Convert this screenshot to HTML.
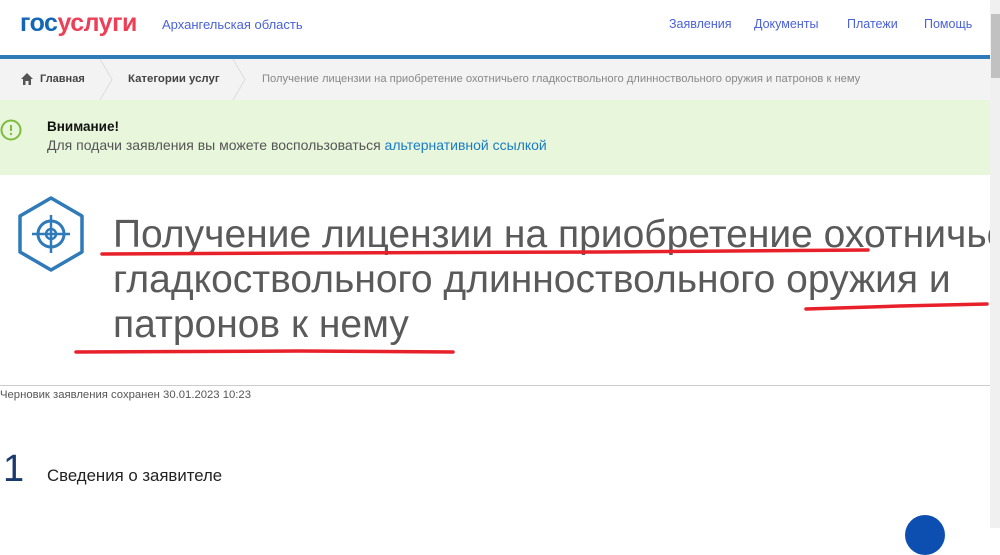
<!DOCTYPE html>
<html><head><meta charset="utf-8"><style>
*{margin:0;padding:0;box-sizing:border-box}
body{width:1000px;height:528px;overflow:hidden;background:#fff;font-family:"Liberation Sans",Arial,sans-serif;position:relative}
.a{position:absolute;white-space:nowrap}
</style></head><body>
<div class="a" style="left:20px;top:9px;font-size:25px;font-weight:bold;letter-spacing:-0.5px"><span style="color:#1467b4">гос</span><span style="color:#ee3f58">услуги</span></div>
<div class="a" style="left:162px;top:17px;font-size:13px;color:#4a62d8">Архангельская область</div>
<div class="a" style="left:669px;top:17px;font-size:12.5px;color:#4a62d8">Заявления</div>
<div class="a" style="left:754px;top:17px;font-size:12.5px;color:#4a62d8">Документы</div>
<div class="a" style="left:847px;top:17px;font-size:12.5px;color:#4a62d8">Платежи</div>
<div class="a" style="left:924px;top:17px;font-size:12.5px;color:#4a62d8">Помощь</div>
<div class="a" style="left:0;top:55px;width:990px;height:4px;background:#2f7ab8"></div>
<div class="a" style="left:0;top:59px;width:990px;height:41px;background:#f3f3f3"></div>
<svg class="a" style="left:0;top:59px" width="990" height="41"><path d="M100 0 L112 20.5 L100 41 M233 0 L245 20.5 L233 41" stroke="#ddd" fill="none"/><path d="M21 20 L27 14 L33 20 H31 V26 H28.5 V22 H25.5 V26 H23 V20Z" fill="#555"/></svg>
<div class="a" style="left:40px;top:73px;font-size:11px;font-weight:bold;color:#444">Главная</div>
<div class="a" style="left:128px;top:73px;font-size:11.4px;font-weight:bold;color:#444">Категории услуг</div>
<div class="a" style="left:262px;top:73px;font-size:11.2px;color:#888">Получение лицензии на приобретение охотничьего гладкоствольного длинноствольного оружия и патронов к нему</div>
<div class="a" style="left:0;top:100px;width:990px;height:75px;background:#e8f6dc"></div>
<svg class="a" style="left:0;top:118px" width="24" height="24"><circle cx="11" cy="12" r="9.5" stroke="#7cbd3f" stroke-width="2" fill="none"/><path d="M11 7 V13" stroke="#7cbd3f" stroke-width="2"/><circle cx="11" cy="16" r="1.2" fill="#7cbd3f"/></svg>
<div class="a" style="left:47px;top:119px;font-size:13.5px;font-weight:bold;color:#111">Внимание!</div>
<div class="a" style="left:47px;top:137px;font-size:14px;color:#555">Для подачи заявления вы можете воспользоваться <span style="color:#1a7bc6">альтернативной ссылкой</span></div>
<svg class="a" style="left:17px;top:195px" width="70" height="80"><path d="M34 3 L65 21 L65 57 L34 75 L3 57 L3 21 Z" stroke="#2f7ab8" stroke-width="3.5" fill="none" stroke-linejoin="round"/><circle cx="34" cy="39" r="13" stroke="#2f7ab8" stroke-width="3" fill="none"/><circle cx="34" cy="39" r="5" stroke="#2f7ab8" stroke-width="2.5" fill="none"/><path d="M34 20 V58 M15 39 H53" stroke="#2f7ab8" stroke-width="2.5"/></svg>
<div class="a" style="left:113px;top:212px;width:877px;overflow:hidden;font-size:39px;line-height:45px;color:#5a5a5a;font-weight:300">Получение лицензии на приобретение охотничьего<br>гладкоствольного длинноствольного оружия и<br>патронов к нему</div>
<svg class="a" style="left:0;top:0" width="1000" height="400"><g stroke="#e8202a" stroke-width="3.5" fill="none" stroke-linecap="round"><path d="M102 254 L300 253 L600 252 L868 250"/><path d="M806 309 L900 306 L987 304"/><path d="M76 352 L300 351 L453 352"/></g></svg>
<div class="a" style="left:0;top:385px;width:990px;height:1px;background:#ccc"></div>
<div class="a" style="left:0;top:389px;font-size:11.3px;color:#555">Черновик заявления сохранен 30.01.2023 10:23</div>
<div class="a" style="left:3px;top:448px;font-size:38px;font-weight:300;color:#1a3a6e">1</div>
<div class="a" style="left:47px;top:466px;font-size:16.8px;color:#222">Сведения о заявителе</div>
<div class="a" style="left:905px;top:515px;width:40px;height:40px;border-radius:50%;background:#0d4fb0"></div>
<div class="a" style="left:990px;top:0;width:10px;height:528px;background:#f0f0f0"></div>
<div class="a" style="left:991px;top:14px;width:9px;height:64px;background:#c1c1c1"></div>
</body></html>
